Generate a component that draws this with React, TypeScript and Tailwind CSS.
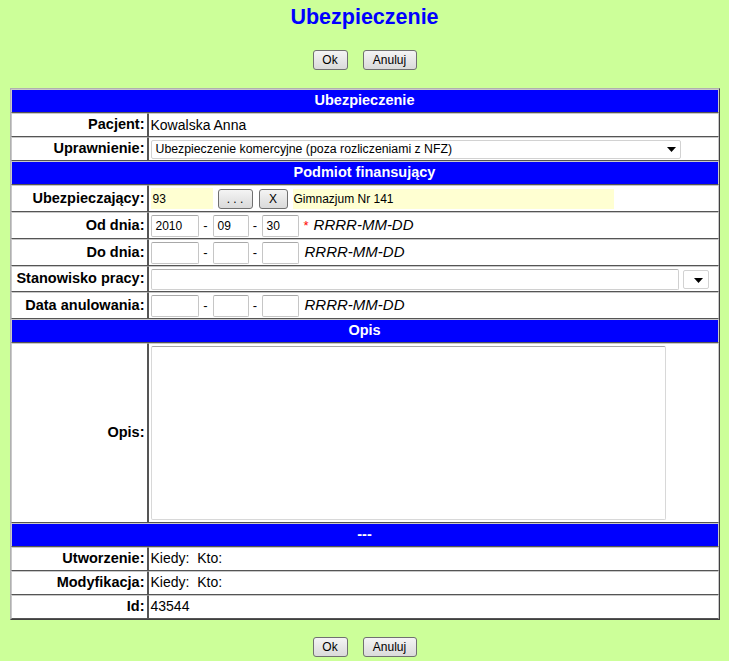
import type { ReactNode } from 'react'

const labelTd =
  'border border-[#c8c8c8] border-b-[#555] border-r-[#555] text-right align-middle pr-[2px] text-[14.5px] font-bold text-black whitespace-nowrap'
const valueTd =
  'border border-[#c8c8c8] border-b-[#555] border-l-[#555] align-middle pl-[2px] text-[14px] text-black'
const headTd =
  'border border-[#c8c8c8] border-b-[#555] bg-[#0000ff] text-center align-middle text-white text-[14.5px] font-bold'

function Btn({ children, w }: { children: ReactNode; w: string }) {
  return (
    <button
      type="button"
      className={`${w} h-[20px] border border-[#707070] rounded-[3px] bg-linear-to-b from-[#f4f4f4] to-[#dadada] text-[12px] text-black leading-none`}
    >
      {children}
    </button>
  )
}

function TopButtons() {
  return (
    <div className="flex justify-center gap-[15px]">
      <Btn w="w-[35px]">Ok</Btn>
      <Btn w="w-[54px]">Anuluj</Btn>
    </div>
  )
}

function Arrow() {
  return (
    <svg width="9" height="5" viewBox="0 0 9 5" className="shrink-0">
      <path d="M0 0h9L4.5 5z" fill="#000" />
    </svg>
  )
}

function DateInputs({ y, m, d, required }: { y?: string; m?: string; d?: string; required?: boolean }) {
  const inp = 'h-[22px] border border-[#c6c6c6] border-t-[#a8a8a8] rounded-[2px] bg-white px-[4px] text-[12px] flex items-center'
  return (
    <div className="flex items-center">
      <div className={`${inp} w-[48px]`}>{y}</div>
      <span className="w-[14px] text-center text-[13px]">-</span>
      <div className={`${inp} w-[36px]`}>{m}</div>
      <span className="w-[13px] text-center text-[13px]">-</span>
      <div className={`${inp} w-[37px]`}>{d}</div>
      {required ? (
        <span className="ml-[5px] text-[13px] text-[#ff0000]">*</span>
      ) : null}
      <span className={`${required ? 'ml-[5px]' : 'ml-[6px]'} text-[15px] italic`}>RRRR-MM-DD</span>
    </div>
  )
}

export default function App() {
  return (
    <div className="min-h-screen bg-[#ccff99] font-['Liberation_Sans',Arial,sans-serif] pb-[4px]">
      <div className="pt-[4px] text-center text-[21.5px] leading-[26px] font-bold text-[#0000ff]">
        Ubezpieczenie
      </div>
      <div className="mt-[20px]">
        <TopButtons />
      </div>

      <table className="mt-[18px] mx-auto w-[710px] table-fixed border-separate border-spacing-0 border border-[#b0b0b0] border-r-[#404040] border-b-[#404040] bg-white">
        <colgroup>
          <col className="w-[137px]" />
          <col />
        </colgroup>
        <tbody>
          <tr>
            <td colSpan={2} className={`${headTd} h-[24px]`}>Ubezpieczenie</td>
          </tr>
          <tr>
            <td className={`${labelTd} h-[24px]`}>Pacjent:</td>
            <td className={valueTd}>Kowalska Anna</td>
          </tr>
          <tr>
            <td className={`${labelTd} h-[24px]`}>Uprawnienie:</td>
            <td className={valueTd}>
              <div className="w-[530px] h-[19px] border border-[#d2d2d2] rounded-[2px] bg-white flex items-center pl-[4px] pr-[4px] text-[12.3px]">
                <span className="flex-1 whitespace-nowrap">Ubezpieczenie komercyjne (poza rozliczeniami z NFZ)</span>
                <Arrow />
              </div>
            </td>
          </tr>
          <tr>
            <td colSpan={2} className={`${headTd} h-[24px]`}>Podmiot finansujący</td>
          </tr>
          <tr>
            <td className={`${labelTd} h-[27px]`}>Ubezpieczający:</td>
            <td className={valueTd}>
              <div className="flex items-center text-[12px]">
                <div className="w-[62px] h-[21px] bg-[#ffffd2] flex items-center pl-[2px]">93</div>
                <div className="ml-[5px]">
                  <Btn w="w-[35px]">. . .</Btn>
                </div>
                <div className="ml-[6px]">
                  <Btn w="w-[29px]">X</Btn>
                </div>
                <div className="ml-[5px] w-[321px] h-[20px] bg-[#ffffd2] flex items-center pl-[1px]">
                  Gimnazjum Nr 141
                </div>
              </div>
            </td>
          </tr>
          <tr>
            <td className={`${labelTd} h-[27px]`}>Od dnia:</td>
            <td className={valueTd}>
              <DateInputs y="2010" m="09" d="30" required />
            </td>
          </tr>
          <tr>
            <td className={`${labelTd} h-[27px]`}>Do dnia:</td>
            <td className={valueTd}>
              <DateInputs />
            </td>
          </tr>
          <tr>
            <td className={`${labelTd} h-[26px]`}>Stanowisko pracy:</td>
            <td className={valueTd}>
              <div className="flex items-center">
                <div className="w-[528px] h-[21px] border border-[#d0d0d0] border-t-[#b0b0b0] rounded-[2px] bg-white" />
                <div className="ml-[4px] w-[26px] h-[19px] border border-[#d2d2d2] rounded-[2px] bg-white flex items-center justify-end pr-[5px] pt-[2px]">
                  <Arrow />
                </div>
              </div>
            </td>
          </tr>
          <tr>
            <td className={`${labelTd} h-[27px]`}>Data anulowania:</td>
            <td className={valueTd}>
              <DateInputs />
            </td>
          </tr>
          <tr>
            <td colSpan={2} className={`${headTd} h-[23px]`}>Opis</td>
          </tr>
          <tr>
            <td className={`${labelTd} h-[180px]`}>Opis:</td>
            <td className={valueTd}>
              <div className="w-[515px] h-[174px] border border-[#d8d8d8] border-t-[#a5a5a5] rounded-[2px] bg-white" />
            </td>
          </tr>
          <tr>
            <td colSpan={2} className={`${headTd} h-[24px]`}>---</td>
          </tr>
          <tr>
            <td className={`${labelTd} h-[24px]`}>Utworzenie:</td>
            <td className={valueTd}>Kiedy:&nbsp; Kto:</td>
          </tr>
          <tr>
            <td className={`${labelTd} h-[24px]`}>Modyfikacja:</td>
            <td className={valueTd}>Kiedy:&nbsp; Kto:</td>
          </tr>
          <tr>
            <td className={`${labelTd} h-[24px]`}>Id:</td>
            <td className={valueTd}>43544</td>
          </tr>
        </tbody>
      </table>

      <div className="mt-[17px]">
        <TopButtons />
      </div>
    </div>
  )
}
